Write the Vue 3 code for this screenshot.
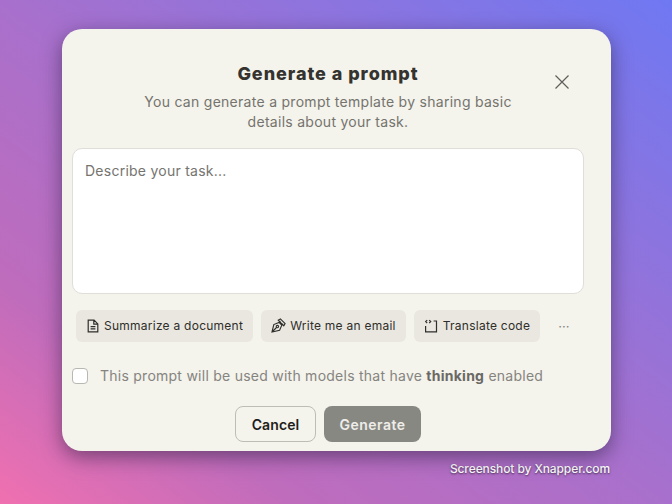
<script setup>
const chips = [
  { label: 'Summarize a document', icon: 'doc' },
  { label: 'Write me an email', icon: 'pen' },
  { label: 'Translate code', icon: 'code' },
]
</script>

<template>
  <div class="page">
    <div class="dialog">
      <button class="close" aria-label="Close">
        <svg width="16" height="16" viewBox="0 0 16 16" fill="none" stroke="#5f5e5a" stroke-width="1.2">
          <path d="M1.5 1.5 14.5 14.5M14.5 1.5 1.5 14.5" />
        </svg>
      </button>
      <div class="content">
        <h1>Generate a prompt</h1>
        <p class="sub">You can generate a prompt template by sharing basic<br>details about your task.</p>
        <div class="box">Describe your task...</div>
        <div class="chips">
          <div class="chip" v-for="c in chips" :key="c.label">
            <svg v-if="c.icon === 'doc'" width="14" height="14" viewBox="0 0 14 14" fill="none" stroke="#2f2e2a" stroke-width="1.2">
              <path d="M2.2 1.2h5.9l3.7 3.7v7.9H2.2zM7.8 1.2v3.9h4M4.6 7.6h4.8M4.6 9.9h4.8" />
            </svg>
            <svg v-else-if="c.icon === 'pen'" width="15" height="15" viewBox="0 0 15 15" fill="none" stroke="#2f2e2a" stroke-width="1.1">
              <path d="M1 14 2.8 6.6 8 4.4 10.8 7.2 8.6 12.2zM1 14l4.5-4.5M7.2 2.2 9.4.9l4.7 4.7-1.3 2.2zM8 4.4 9.4 3M10.8 7.2l1.4-1.4" />
              <circle cx="6.4" cy="8.6" r="1.2" />
            </svg>
            <svg v-else width="15" height="14" viewBox="0 0 15 14" fill="none" stroke="#2f2e2a" stroke-width="1.2">
              <path d="M9.6 2h2.9v10.8H1.6V7M3.2 4 1.7 2.6 3.2 1.2M5.2 1.2 6.7 2.6 5.2 4" />
            </svg>
            <span>{{ c.label }}</span>
          </div>
          <span class="more">···</span>
        </div>
        <label class="check">
          <span class="tick"></span>
          <span>This prompt will be used with models that have <b>thinking</b> enabled</span>
        </label>
        <div class="actions">
          <button class="btn cancel">Cancel</button>
          <button class="btn generate">Generate</button>
        </div>
      </div>
    </div>
    <div class="mark">Screenshot by Xnapper.com</div>
  </div>
</template>

<style>
html, body {
  margin: 0;
  height: 100%;
}
</style>

<style scoped>
.page {
  width: 672px;
  height: 504px;
  box-sizing: border-box;
  padding: 29px 61px 0 62px;
  overflow: hidden;
  font-family: "Inter", "Liberation Sans", sans-serif;
  background: linear-gradient(to bottom left, #6f78f2 0%, #a870cc 50%, #bf6cbc 78%, #f070b0 100%);
}
.dialog {
  position: relative;
  width: 549px;
  height: 422px;
  box-sizing: border-box;
  padding: 0 27px 0 10px;
  background: #f4f3ec;
  border-radius: 20px;
  box-shadow: 0 6px 20px rgba(40, 30, 60, 0.55);
}
.close {
  position: absolute;
  top: 45px;
  right: 41px;
  width: 16px;
  height: 16px;
  padding: 0;
  border: 0;
  background: none;
  display: flex;
}
.content {
  display: flex;
  flex-direction: column;
  padding-top: 33px;
}
h1 {
  margin: 0;
  font-size: 18px;
  line-height: 24px;
  font-weight: 800;
  letter-spacing: 0.95px;
  text-align: center;
  color: #34332f;
}
.sub {
  margin: 6px 0 0;
  font-size: 14px;
  line-height: 20px;
  letter-spacing: 0.28px;
  text-align: center;
  color: #74736e;
}
.box {
  margin-top: 16px;
  height: 146px;
  box-sizing: border-box;
  padding: 12px 12px;
  background: #fff;
  border: 1px solid #dfded9;
  border-radius: 10px;
  font-size: 14px;
  line-height: 20px;
  letter-spacing: 0.25px;
  color: #75746f;
}
.chips {
  display: flex;
  align-items: center;
  gap: 8px;
  margin-top: 16px;
  padding-left: 4px;
}
.chip {
  display: flex;
  align-items: center;
  gap: 4px;
  height: 32px;
  box-sizing: border-box;
  padding: 0 10px 1px;
  border-radius: 6px;
  background: #e9e7e0;
  font-size: 12px;
  letter-spacing: 0.25px;
  color: #2f2e2a;
}
.more {
  margin-left: 10px;
  font-size: 13px;
  color: #85847f;
}
.check {
  display: flex;
  align-items: center;
  gap: 12px;
  margin-top: 26px;
  font-size: 14px;
  line-height: 16px;
  letter-spacing: 0.25px;
  color: #85847f;
}
.check b {
  color: #6a6964;
  font-weight: 700;
}
.tick {
  width: 16px;
  height: 16px;
  box-sizing: border-box;
  background: #fff;
  border: 1px solid #b8b7b1;
  border-radius: 4px;
}
.actions {
  display: flex;
  justify-content: center;
  gap: 8px;
  margin-top: 22px;
}
.btn {
  height: 36px;
  box-sizing: border-box;
  border-radius: 8px;
  font-family: inherit;
  font-size: 14px;
  font-weight: 600;
}
.cancel {
  width: 81px;
  background: transparent;
  border: 1px solid #bdbcb6;
  color: #1f1e1b;
  letter-spacing: 0.1px;
}
.generate {
  width: 97px;
  background: #888883;
  border: 0;
  color: #eeede8;
  letter-spacing: 0.5px;
}
.mark {
  margin-top: 10px;
  padding-right: 1px;
  text-align: right;
  font-size: 12px;
  line-height: 16px;
  font-weight: 500;
  letter-spacing: -0.1px;
  color: #fff;
  text-shadow: 0 1px 2px rgba(0, 0, 0, 0.6);
}
</style>
